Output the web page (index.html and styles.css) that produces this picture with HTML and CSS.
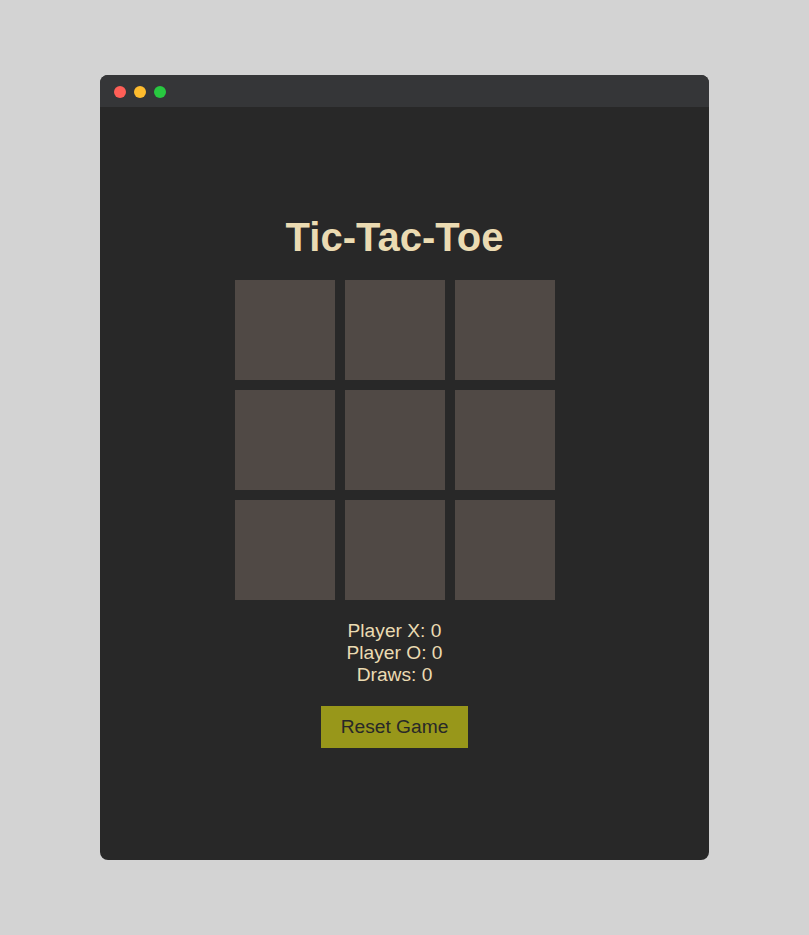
FILE: index.html
```html
<!DOCTYPE html>
<html lang="en">
<head>
<meta charset="utf-8">
<title>Tic-Tac-Toe</title>
<link rel="stylesheet" href="styles.css">
</head>
<body>
<div class="window">
  <div class="titlebar">
    <span class="dot red"></span>
    <span class="dot yellow"></span>
    <span class="dot green"></span>
  </div>
  <div class="content">
    <h1 class="title">Tic-Tac-Toe</h1>
    <div class="board">
      <div class="cell"></div><div class="cell"></div><div class="cell"></div>
      <div class="cell"></div><div class="cell"></div><div class="cell"></div>
      <div class="cell"></div><div class="cell"></div><div class="cell"></div>
    </div>
    <div class="scores">
      <div>Player X: 0</div>
      <div>Player O: 0</div>
      <div>Draws: 0</div>
    </div>
    <button class="reset">Reset Game</button>
  </div>
</div>
</body>
</html>
```
FILE: styles.css
```css
html, body {
  margin: 0;
  padding: 0;
}
body {
  background: #d3d3d3;
  font-family: "Liberation Sans", Arial, sans-serif;
  padding: 75px 100px 0 100px;
  height: 935px;
  box-sizing: border-box;
}
.window {
  width: 609px;
  height: 785px;
  background: #282828;
  border-radius: 8px;
  overflow: hidden;
  display: flex;
  flex-direction: column;
}
.titlebar {
  height: 32px;
  box-sizing: border-box;
  background: #353638;
  display: flex;
  align-items: center;
  padding: 2px 0 0 14px;
  gap: 8px;
  flex: none;
}
.dot {
  width: 12px;
  height: 12px;
  border-radius: 50%;
}
.red { background: #ff5f57; }
.yellow { background: #febc2e; }
.green { background: #28c840; }
.content {
  flex: 1;
  display: flex;
  flex-direction: column;
  align-items: center;
  padding: 107px 20px 0 0;
}
.title {
  margin: 0 0 20px 0;
  font-size: 40px;
  font-weight: bold;
  color: #ebdbb2;
  line-height: 46px;
}
.board {
  display: grid;
  grid-template-columns: repeat(3, 100px);
  grid-template-rows: repeat(3, 100px);
  gap: 10px;
}
.cell {
  background: #504945;
}
.scores {
  margin-top: 20px;
  font-size: 19.2px;
  line-height: 22px;
  color: #ebdbb2;
  text-align: center;
}
.reset {
  margin-top: 20px;
  background: #98971a;
  color: #282828;
  border: none;
  font-family: "Liberation Sans", Arial, sans-serif;
  font-size: 19.2px;
  line-height: 22px;
  padding: 10px 20px;
}
```
